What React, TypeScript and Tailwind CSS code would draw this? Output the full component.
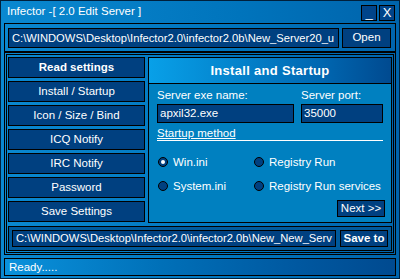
import React from "react";

const navBtns = [
  "Read settings",
  "Install / Startup",
  "Icon / Size / Bind",
  "ICQ Notify",
  "IRC Notify",
  "Password",
  "Save Settings",
];

export default function App() {
  return (
    <div
      className="w-[400px] h-[279px] overflow-hidden text-white text-[11.5px] bg-[linear-gradient(90deg,#0a88d0,#0074bc_60%,#0064ac)] border border-[#00203c] flex flex-col"
      style={{ fontFamily: '"Liberation Sans", Arial, sans-serif' }}
    >
      <div className="h-[22px] flex items-center pl-[6px] pr-[4px] shrink-0">
        <span className="text-[11.5px] leading-none">Infector -[ 2.0 Edit Server ]</span>
        <div className="ml-auto flex gap-[2px] mt-[1px]">
          <div className="w-[16px] h-[16px] border border-black bg-[#00448a] flex items-end justify-center text-[13px] leading-[15px]">_</div>
          <div className="w-[16px] h-[16px] border border-black bg-[#00448a] flex items-center justify-center text-[13px] leading-none">X</div>
        </div>
      </div>

      <div className="mx-[3px] border border-black pt-[4px] pb-[3px] pl-[3px] pr-[4px] flex gap-[3px] h-[29px] shrink-0">
        <div className="flex-1 border border-black bg-[#004080] text-[11.2px] leading-[18px] px-[3px] whitespace-nowrap overflow-hidden">
          C:\WINDOWS\Desktop\Infector2.0\infector2.0b\New_Server20_u
        </div>
        <div className="w-[49px] border border-black bg-[#004080] flex items-center justify-center">Open</div>
      </div>

      <div className="mx-[3px] border border-black p-[1px] h-[203px] shrink-0">
        <div className="border border-black h-full px-[1px] pt-[2px] flex flex-col">
          <div className="flex gap-[3px] h-[166px]">
            <div className="w-[137px] flex flex-col gap-[3px]">
              {navBtns.map((b, i) => (
                <div
                  key={b}
                  className={
                    "h-[21px] border border-black bg-[#004080] flex items-center justify-center " +
                    (i === 0 ? "font-bold" : "")
                  }
                >
                  {b}
                </div>
              ))}
            </div>
            <div className="flex-1 border border-black bg-[#0080c0] flex flex-col">
              <div className="h-[26px] shrink-0 bg-[linear-gradient(90deg,#08a0e8,#0068b2_70%,#004a90)] border-b border-black flex items-center justify-center text-[13px] font-bold tracking-[0.3px]">
                Install and Startup
              </div>
              <div className="px-[8px] pt-[4px]">
                <div className="flex gap-[7px]">
                  <div className="w-[137px]">
                    <div className="leading-[15px]">Server exe name:</div>
                    <div className="mt-[1px] h-[19px] border border-black bg-[#004080] px-[2px] leading-[17px]">apxil32.exe</div>
                  </div>
                  <div className="w-[82px]">
                    <div className="leading-[15px]">Server port:</div>
                    <div className="mt-[1px] h-[19px] border border-black bg-[#004080] px-[2px] leading-[17px]">35000</div>
                  </div>
                </div>
                <div className="mt-[4px] border-b border-white leading-[13px]">
                  <span className="underline underline-offset-[1px]">Startup method</span>
                </div>
                <div className="grid grid-cols-[96px_1fr] gap-y-[10px] mt-[14px]">
                  <Radio label="Win.ini" checked />
                  <Radio label="Registry Run" />
                  <Radio label="System.ini" />
                  <Radio label="Registry Run services" />
                </div>
                <div className="flex justify-end mt-[7px] -mr-[2px]">
                  <div className="w-[48px] h-[17px] border border-black bg-[#004080] flex items-center justify-center">
                    {"Next >>"}
                  </div>
                </div>
              </div>
            </div>
          </div>
          <div className="mt-[3px] border border-black p-[3px] h-[25px] flex gap-[4px] bg-[#005a9c]">
            <div className="flex-1 border border-black bg-[#004080] text-[11.2px] leading-[15px] px-[3px] whitespace-nowrap overflow-hidden">
              C:\WINDOWS\Desktop\Infector2.0\infector2.0b\New_New_Serv
            </div>
            <div className="w-[48px] border border-black bg-[#004080] font-bold flex items-center justify-center">Save to</div>
          </div>
        </div>
      </div>

      <div className="mx-[3px] mt-[3px] h-[18px] border border-black bg-[linear-gradient(90deg,#0a92dc,#0070b8_40%,#0058a0_75%,#004a90)] leading-[16px] px-[4px]">
        Ready.....
      </div>
    </div>
  );
}

function Radio({ label, checked }: { label: string; checked?: boolean }) {
  return (
    <div className="flex items-center gap-[5px] leading-[14px] pl-[1px]">
      <div className="w-[10px] h-[10px] rounded-full border border-black bg-[#004080] flex items-center justify-center">
        {checked && <div className="w-[4px] h-[4px] bg-white rounded-full" />}
      </div>
      <span>{label}</span>
    </div>
  );
}
